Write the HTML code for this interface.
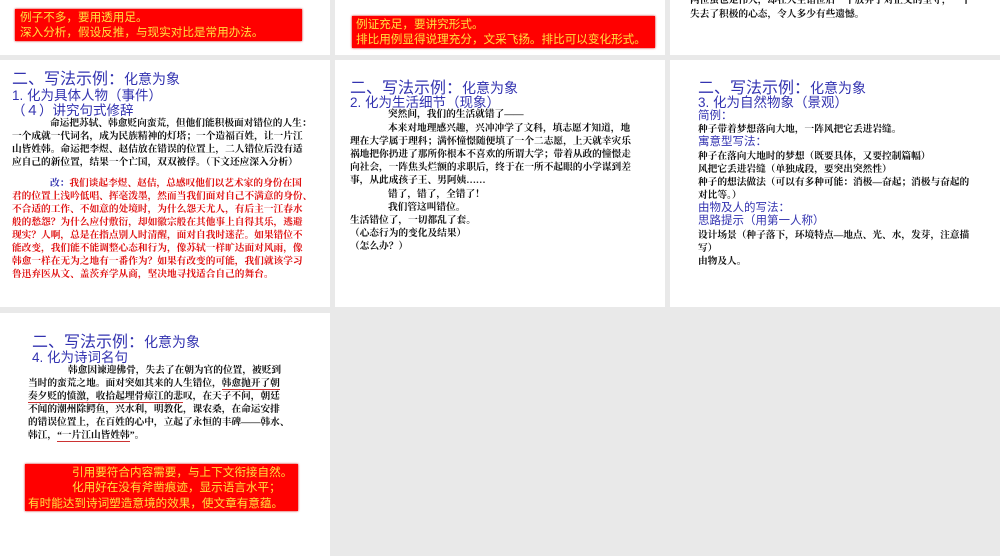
<!DOCTYPE html>
<html><head><meta charset="utf-8"><style>
body{margin:0;width:1000px;height:556px;background:#e9e9e9;position:relative;overflow:hidden;font-family:"Liberation Sans","Noto Sans CJK SC",sans-serif}
.s{position:absolute;background:#fff;overflow:hidden}
.a{position:absolute;white-space:nowrap;line-height:1.2}
.t{color:#3333b0;font-size:16px}
.st{color:#3333b0;font-size:13.5px}
.b{font-family:"Liberation Serif","Noto Serif CJK SC",serif;font-size:9.7px;font-weight:bold;color:#111}
.r{color:#e01010}
.box{position:absolute;background:#ff0000;color:#ffe040;font-size:11.6px;line-height:15px;box-shadow:0 0 2px #c00;white-space:nowrap;overflow:hidden}
</style></head><body>
<div class="s" style="left:0;top:0;width:330px;height:55px">
 <div class="box" style="left:15px;top:9px;width:287px;height:32px;padding-left:5px;padding-top:1px;box-sizing:border-box">例子不多，要用透用足。<br>深入分析，假设反推，与现实对比是常用办法。</div>
</div>
<div class="s" style="left:335px;top:0;width:330px;height:55px">
 <div class="box" style="left:17px;top:16px;width:303px;height:32px;padding-left:4px;padding-top:1px;box-sizing:border-box">例证充足，要讲究形式。<br>排比用例显得说理充分，文采飞扬。排比可以变化形式。</div>
</div>
<div class="s" style="left:670px;top:0;width:330px;height:55px">
 <div class="a b" style="left:20px;top:-5px">两位虽也是伟人，却在人生错位后一个放弃了对正义的坚守，一个</div>
 <div class="a b" style="left:20px;top:9px">失去了积极的心态，令人多少有些遗憾。</div>
</div>

<div class="s" style="left:0;top:60px;width:330px;height:247px">
 <div class="a t" style="left:12px;top:10px">二、写法示例：<span style="font-size:14px">化意为象</span></div>
 <div class="a st" style="left:12px;top:28px">1. 化为具体人物（事件）</div>
 <div class="a st" style="left:12px;top:43px">（４）讲究句式修辞</div>
 <div class="a b" style="left:50px;top:58px">命运把苏轼、韩愈贬向蛮荒，但他们能积极面对错位的人生：</div>
 <div class="a b" style="left:12px;top:71px">一个成就一代词名，成为民族精神的灯塔；一个造福百姓，让一片江</div>
 <div class="a b" style="left:12px;top:84px">山皆姓韩。命运把李煜、赵佶放在错误的位置上，二人错位后没有适</div>
 <div class="a b" style="left:12px;top:97px">应自己的新位置，结果一个亡国，双双被俘。（下文还应深入分析）</div>
 <div class="a b r" style="left:50px;top:118px"><span style="color:#3333b0">改：</span>我们谈起李煜、赵佶，总感叹他们以艺术家的身份在国</div>
 <div class="a b r" style="left:12px;top:131px">君的位置上浅吟低唱、挥毫泼墨，然而当我们面对自己不满意的身份、</div>
 <div class="a b r" style="left:12px;top:144px">不合适的工作、不如意的处境时，为什么怨天尤人，有后主一江春水</div>
 <div class="a b r" style="left:12px;top:157px">般的愁怨？为什么应付敷衍，却如徽宗般在其他事上自得其乐，逃避</div>
 <div class="a b r" style="left:12px;top:170px">现实？人啊，总是在指点别人时清醒，面对自我时迷茫。如果错位不</div>
 <div class="a b r" style="left:12px;top:183px">能改变，我们能不能调整心态和行为，像苏轼一样旷达面对风雨，像</div>
 <div class="a b r" style="left:12px;top:196px">韩愈一样在无为之地有一番作为？如果有改变的可能，我们就该学习</div>
 <div class="a b r" style="left:12px;top:209px">鲁迅弃医从文、盖茨弃学从商，坚决地寻找适合自己的舞台。</div>
</div>

<div class="s" style="left:335px;top:60px;width:330px;height:247px">
 <div class="a t" style="left:15px;top:19px">二、写法示例：<span style="font-size:14px">化意为象</span></div>
 <div class="a st" style="left:15px;top:35px">2. 化为生活细节（现象）</div>
 <div class="a b" style="left:53px;top:49px">突然间，我们的生活就错了——</div>
 <div class="a b" style="left:53px;top:63px">本来对地理感兴趣，兴冲冲学了文科，填志愿才知道，地</div>
 <div class="a b" style="left:15px;top:76px">理在大学属于理科；满怀憧憬随便填了一个二志愿，上天就幸灾乐</div>
 <div class="a b" style="left:15px;top:89px">祸地把你扔进了那所你根本不喜欢的所谓大学；带着从政的憧憬走</div>
 <div class="a b" style="left:15px;top:102px">向社会，一阵焦头烂额的求职后，终于在一所不起眼的小学谋到差</div>
 <div class="a b" style="left:15px;top:115px">事，从此成孩子王、男阿姨……</div>
 <div class="a b" style="left:53px;top:129px">错了，错了，全错了！</div>
 <div class="a b" style="left:53px;top:142px">我们管这叫错位。</div>
 <div class="a b" style="left:15px;top:155px">生活错位了，一切都乱了套。</div>
 <div class="a b" style="left:15px;top:168px">（心态行为的变化及结果）</div>
 <div class="a b" style="left:15px;top:181px">（怎么办？）</div>
</div>

<div class="s" style="left:670px;top:60px;width:330px;height:247px">
 <div class="a t" style="left:28px;top:19px">二、写法示例：<span style="font-size:14px">化意为象</span></div>
 <div class="a st" style="left:28px;top:35px">3. 化为自然物象（景观）</div>
 <div class="a st" style="left:28px;top:50px;font-size:11.5px">简例：</div>
 <div class="a b" style="left:28px;top:64px">种子带着梦想落向大地，一阵风把它丢进岩缝。</div>
 <div class="a st" style="left:28px;top:76px;font-size:11.5px">寓意型写法：</div>
 <div class="a b" style="left:28px;top:91px">种子在落向大地时的梦想（既要具体，又要控制篇幅）</div>
 <div class="a b" style="left:28px;top:104px">风把它丢进岩缝（单独成段，要突出突然性）</div>
 <div class="a b" style="left:28px;top:117px">种子的想法做法（可以有多种可能：消极—奋起；消极与奋起的</div>
 <div class="a b" style="left:28px;top:130px">对比等。）</div>
 <div class="a st" style="left:28px;top:142px;font-size:11.5px">由物及人的写法：</div>
 <div class="a st" style="left:28px;top:155px;font-size:11.5px">思路提示（用第一人称）</div>
 <div class="a b" style="left:28px;top:170px">设计场景（种子落下，环境特点—地点、光、水，发芽，注意描</div>
 <div class="a b" style="left:28px;top:183px">写）</div>
 <div class="a b" style="left:28px;top:196px">由物及人。</div>
</div>

<div class="s" style="left:0;top:313px;width:330px;height:243px">
 <div class="a t" style="left:32px;top:20px">二、写法示例：<span style="font-size:14px">化意为象</span></div>
 <div class="a st" style="left:32px;top:37px">4. 化为诗词名句</div>
 <div class="a b" style="left:68px;top:52px">韩愈因谏迎佛骨，失去了在朝为官的位置，被贬到</div>
 <div class="a b" style="left:28px;top:65px">当时的蛮荒之地。面对突如其来的人生错位，<span style="border-bottom:1px solid #c33">韩愈抛开了朝</span></div>
 <div class="a b" style="left:28px;top:78px"><span style="border-bottom:1px solid #c33">奏夕贬的愤激，收拾起埋骨瘴江的悲</span>叹，在天子不问，朝廷</div>
 <div class="a b" style="left:28px;top:91px">不闻的潮州除鳄鱼，兴水利，明教化，课农桑，在命运安排</div>
 <div class="a b" style="left:28px;top:104px">的错误位置上，在百姓的心中，立起了永恒的丰碑——韩水、</div>
 <div class="a b" style="left:28px;top:117px">韩江，<span style="border-bottom:1px solid #c33">“一片江山皆姓韩</span>”。</div>
 <div class="box" style="left:25px;top:151px;width:273px;height:47px;line-height:15.3px;padding-top:1px;box-sizing:border-box">
  <div style="padding-left:47px">引用要符合内容需要，与上下文衔接自然。</div>
  <div style="padding-left:47px">化用好在没有斧凿痕迹，显示语言水平；</div>
  <div style="padding-left:3px">有时能达到诗词塑造意境的效果，使文章有意蕴。</div>
 </div>
</div>
</body></html>
